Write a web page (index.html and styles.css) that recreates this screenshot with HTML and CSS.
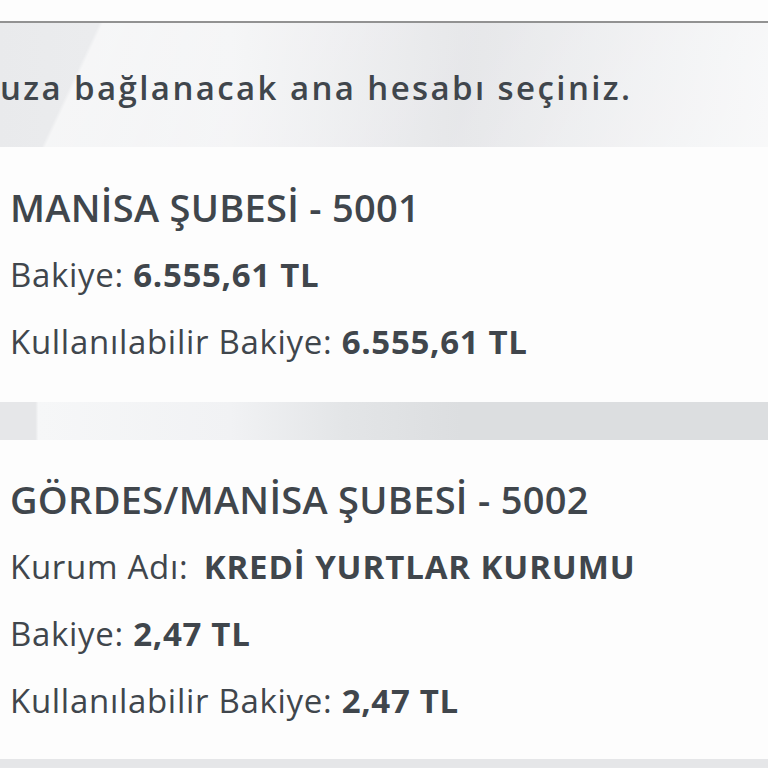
FILE: index.html
```html
<!DOCTYPE html>
<html lang="tr">
<head>
    <meta charset="UTF-8">
    <meta name="viewport" content="width=device-width, initial-scale=1.0">
    <title>Hesap Seçimi</title>
    <link rel="stylesheet" href="styles.css">
</head>
<body>
    <div class="topbar"></div>

    <div class="intro">
        <p>uza bağlanacak ana hesabı seçiniz.</p>
    </div>

    <div class="account-card first">
        <div class="branch">MANİSA ŞUBESİ - 5001</div>
        <div class="row">Bakiye: <strong>6.555,61 TL</strong></div>
        <div class="row">Kullanılabilir Bakiye: <strong>6.555,61 TL</strong></div>
    </div>

    <div class="divider"></div>

    <div class="account-card second">
        <div class="branch">GÖRDES/MANİSA ŞUBESİ - 5002</div>
        <div class="row">Kurum Adı: <strong class="org">KREDİ YURTLAR KURUMU</strong></div>
        <div class="row">Bakiye: <strong>2,47 TL</strong></div>
        <div class="row">Kullanılabilir Bakiye: <strong>2,47 TL</strong></div>
    </div>

    <div class="footer-strip"></div>
</body>
</html>
```

FILE: styles.css
```css
body {
    margin: 0;
    font-family: "Open Sans", Lato, sans-serif;
    color: #40464c;
    background: #e6e7e9;
    overflow: hidden;
}

.topbar {
    height: 21px;
    background: #fdfdfd;
    border-bottom: 2px solid #929292;
}

.intro {
    height: 124px;
    background:
        linear-gradient(115deg, rgba(255,255,255,0) 0%, rgba(255,255,255,0) 12%, rgba(255,255,255,0.55) 12.5%, rgba(255,255,255,0.2) 60%, rgba(255,255,255,0.6) 100%),
        linear-gradient(90deg, #e9eaec 0%, #eeeff1 30%, #e0e1e4 60%, #eeeff1 100%);
    display: flex;
    align-items: center;
}

.intro p {
    margin: 4px 0 0 0;
    font-size: 33px;
    font-weight: 600;
    letter-spacing: 2.4px;
    white-space: nowrap;
}

.account-card {
    background: #fdfdfd;
    padding: 27px 0 27px 10px;
}

.account-card.second {
    padding: 26px 0 25px 10px;
}

.branch {
    font-size: 38px;
    font-weight: 600;
    line-height: 67px;
    letter-spacing: 0.3px;
}

.row {
    font-size: 33px;
    line-height: 67px;
    letter-spacing: 0.7px;
}

.row strong {
    font-weight: 700;
}

.row .org {
    margin-left: 6px;
    letter-spacing: 0.9px;
}

.divider {
    height: 38px;
    background: linear-gradient(90deg, #e6e7e9 0%, #e6e7e9 4.6%, #f6f7f8 5%, #f1f2f4 30%, #e3e5e7 45%, #dcdee0 60%, #dcdee0 100%);
}

.footer-strip {
    height: 8px;
    background: #e5e6e8;
}
```
